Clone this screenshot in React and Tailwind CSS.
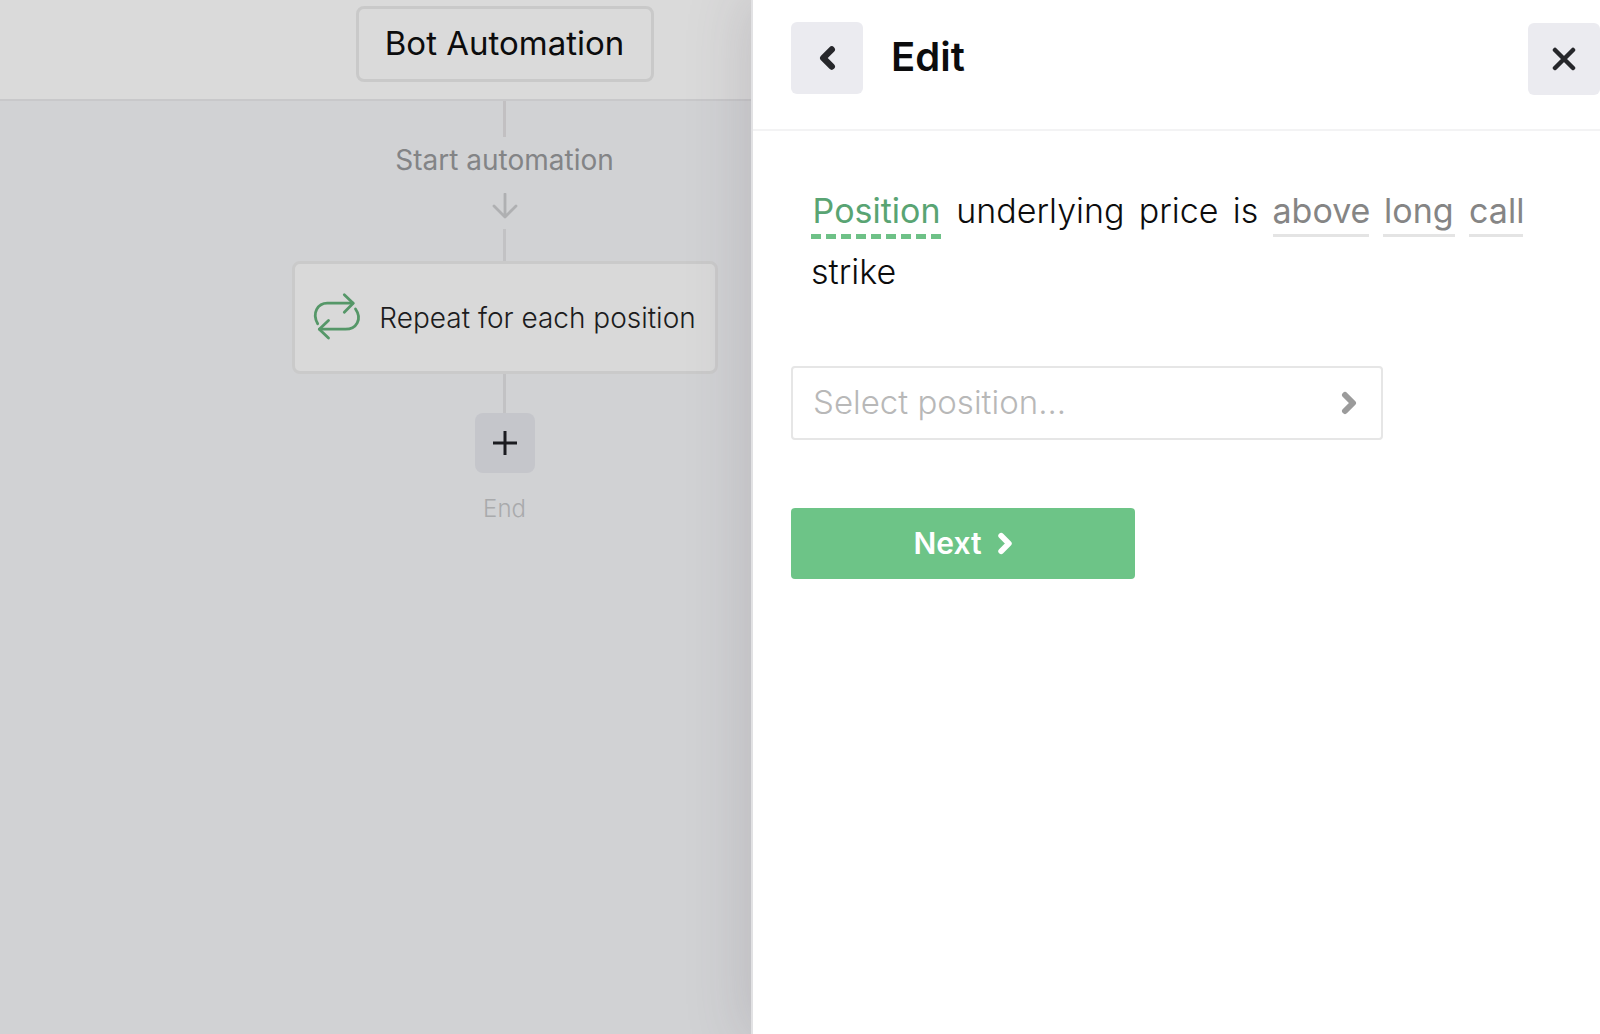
function Chevron({ left, className }) {
  return (
    <svg viewBox="0 0 16 24" className={className} fill="none" stroke="currentColor" strokeWidth="6" strokeLinecap="round" strokeLinejoin="round" aria-hidden="true">
      <path d={left ? "M12 4 4 12l8 8" : "M4 4l8 8-8 8"} />
    </svg>
  );
}

function CloseIcon() {
  return (
    <svg viewBox="0 0 24 24" className="size-6" fill="none" stroke="currentColor" strokeWidth="4.500" strokeLinecap="round" aria-hidden="true">
      <path d="M3 3l18 18M21 3 3 21" />
    </svg>
  );
}

function RepeatIcon() {
  return (
    <svg viewBox="0 0 48 48" className="size-12 shrink-0 overflow-visible text-[#559768]" fill="none" stroke="currentColor" strokeWidth="2.8" strokeLinecap="round" strokeLinejoin="round" aria-hidden="true">
      <path d="M4.700 29.800C-1.500 19 5 9.200 14.300 9.200H40" />
      <path d="M31.300.8 40.200 9.200l-8.900 9" />
      <path d="M42.500 15C49.500 25 43.500 35.200 32.500 35.200H6.500" />
      <path d="M15.500 26.500 6.300 35.200l9.200 8.800" />
    </svg>
  );
}

function ArrowDown() {
  return (
    <svg viewBox="0 0 26 26" className="size-[26px] text-[#afb0b2]" fill="none" stroke="currentColor" strokeWidth="2.800" strokeLinecap="round" strokeLinejoin="round" aria-hidden="true">
      <path d="M13 1v23M2 13l11 11 11-11" />
    </svg>
  );
}

function Token({ children, className }) {
  return (
    <button type="button" className={`inline-block border-b-[3px] border-[#e4e4e4] text-center font-normal leading-[46px] text-[#858585] ${className}`}>
      {children}
    </button>
  );
}

function Canvas() {
  return (
    <main className="flex min-w-0 flex-[47] flex-col bg-[#d1d2d4]">
      <header className="flex h-[101px] items-start justify-center border-b-2 border-[#c8c8ca] bg-[#dadada] pt-1.5 pl-[258px]">
        <button type="button" className="h-[76px] min-w-[298px] rounded-lg border-3 border-[#c9c9c9] text-[33px] whitespace-nowrap text-[#0c0c0d]">
          Bot Automation
        </button>
      </header>
      <section className="flex flex-col items-center pl-[258px]">
        <div className="h-9 w-[3px] bg-[#c2c0c2]" />
        <p className="mt-1 text-[28px] leading-[38px] text-[#838486]">Start automation</p>
        <div className="mt-3.5">
          <ArrowDown />
        </div>
        <div className="mt-2.5 h-8 w-[3px] bg-[#c2c2c4]" />
        <button type="button" className="flex h-[113px] items-center gap-[18px] rounded-lg border-3 border-[#cacaca] bg-[#d9d9d9] px-[18px] text-[28px] font-light whitespace-nowrap text-[#1c1c1d]">
          <RepeatIcon />
          <span className="min-w-[318px]">Repeat for each position</span>
        </button>
        <div className="h-[39px] w-[3px] bg-[#c2c2c4]" />
        <button type="button" aria-label="Add step" className="flex size-[60px] items-center justify-center rounded-lg bg-[#c5c6cb] text-[#1b1b20]">
          <svg viewBox="0 0 26 26" className="size-[26px]" fill="none" stroke="currentColor" strokeWidth="3" aria-hidden="true">
            <path d="M13 1v24M1 13h24" />
          </svg>
        </button>
        <p className="mt-[18px] text-2xl leading-9 font-light text-[#a9aaac]">End</p>
      </section>
    </main>
  );
}

function Drawer() {
  return (
    <aside className="relative flex min-w-0 flex-[53] flex-col border-l-2 border-[#e2e2e4] bg-white shadow-[0_0_56px_6px_rgba(75,65,85,0.17)]">
      <header className="flex h-[131px] items-start border-b-2 border-[#f3f3f4] pt-[22px] pl-[38px]">
        <button type="button" aria-label="Back" className="flex size-[72px] items-center justify-center rounded-md bg-[#ebebf0] text-[#26272b]">
          <Chevron left className="h-[26px] w-[17px]" />
        </button>
        <h1 className="ml-7 grow text-[40px] leading-[70px] font-semibold text-[#0c0c0d]">Edit</h1>
        <button type="button" aria-label="Close" className="mt-px flex size-[72px] items-center justify-center rounded-md bg-[#ebebf0] text-[#26272b]">
          <CloseIcon />
        </button>
      </header>
      <form className="flex flex-col items-start px-[38px]" onSubmit={(e) => e.preventDefault()}>
        <p className="mt-[49px] ml-5 w-[712px] text-justify text-[34px] leading-[61px] font-light text-[#0c0c0d]">
          <button type="button" className="inline-block w-[131px] text-center font-normal leading-[46px] text-[#59a473]">
            Position
            <span className="block h-[5px] bg-[repeating-linear-gradient(90deg,#6ec187_0_10px,transparent_10px_15px)]" />
          </button>{" "}
          underlying price is <Token className="w-24">above</Token> <Token className="w-[72px]">long</Token>{" "}
          <Token className="w-[54px]">call</Token> strike
        </p>
        <button type="button" className="mt-16 flex h-[74px] w-[592px] items-center justify-between rounded border-2 border-[#e6e6e6] px-5 text-left text-[33px] font-light text-[#b8b8b8]">
          Select position...
          <Chevron className="mr-1 h-6 w-4 text-[#9b9b9b]" />
        </button>
        <button type="submit" className="mt-[68px] flex h-[71px] w-[344px] items-center justify-center gap-[15px] rounded bg-[#6dc487] text-[30px] font-semibold text-white">
          Next
          <Chevron className="h-[23px] w-4" />
        </button>
      </form>
    </aside>
  );
}

export default function App() {
  return (
    <div className="flex min-h-screen overflow-hidden font-['Inter',sans-serif]">
      <Canvas />
      <Drawer />
    </div>
  );
}
